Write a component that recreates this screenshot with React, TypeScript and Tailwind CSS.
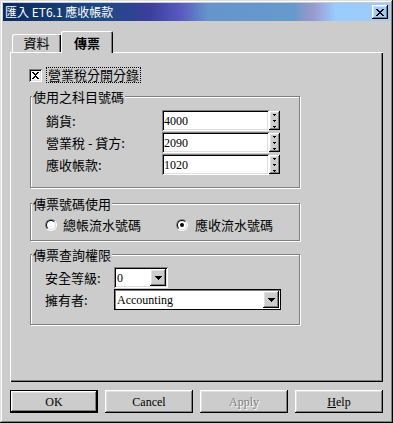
import type { ReactNode } from "react";

const raised = "shadow-[inset_-1px_-1px_#000,inset_1px_1px_#fff,inset_-2px_-2px_#808080,inset_2px_2px_#dfdfdf]";
const sunken = "shadow-[inset_1px_1px_#808080,inset_-1px_-1px_#fff,inset_2px_2px_#000,inset_-2px_-2px_#dfdfdf]";
const tabEdge = "shadow-[inset_1px_1px_#fff,inset_-1px_0_#000,inset_-2px_0_#808080]";
const serif = "font-['Liberation_Serif',serif]";

// pixel X used by the close box and the checkbox
function PixelX({ rows }: { rows: string[] }) {
  return (
    <svg width={rows[0].length} height={rows.length} shapeRendering="crispEdges">
      {rows.map((r, y) =>
        r.split("").map((c, x) => (c === "x" ? <rect key={`${x}-${y}`} x={x} y={y} width={1} height={1} fill="#000" /> : null))
      )}
    </svg>
  );
}

function DownArrow() {
  return (
    <svg width="7" height="4" shapeRendering="crispEdges">
      <rect x="0" y="0" width="7" height="1" fill="#000" />
      <rect x="1" y="1" width="5" height="1" fill="#000" />
      <rect x="2" y="2" width="3" height="1" fill="#000" />
      <rect x="3" y="3" width="1" height="1" fill="#000" />
    </svg>
  );
}

function Spinner() {
  return (
    <div className={`w-[11px] h-[19px] ${raised} flex items-center justify-center`}>
      <svg width="3" height="14" shapeRendering="crispEdges">
        {[0, 6, 12].map((y) => (
          <g key={y}>
            <rect x="0" y={y} width="3" height="1" fill="#000" />
            <rect x="1" y={y + 1} width="1" height="1" fill="#000" />
          </g>
        ))}
      </svg>
    </div>
  );
}

function Group({ title, className, children }: { title: string; className: string; children: ReactNode }) {
  return (
    <div className={`relative ml-[20px] w-[270px] border border-[#808080] shadow-[inset_1px_1px_#fff,1px_1px_#fff] ${className}`}>
      <span className="absolute left-[1px] -top-[7px] bg-[#cccccc] px-px leading-[14px]">{title}</span>
      {children}
    </div>
  );
}

function Radio({ checked }: { checked?: boolean }) {
  return (
    <div className="w-[12px] h-[12px] rounded-full border border-[#808080] border-r-white border-b-white">
      <div className="w-full h-full rounded-full border border-black border-r-[#dfdfdf] border-b-[#dfdfdf] bg-white flex items-center justify-center">
        {checked && <div className="w-[4px] h-[4px] rounded-full bg-black" />}
      </div>
    </div>
  );
}

function Button({ label, isDefault, disabled }: { label: ReactNode; isDefault?: boolean; disabled?: boolean }) {
  return (
    <div
      className={`w-[88px] h-[23px] flex items-center justify-center ${raised} ${serif} text-[12px] ${
        isDefault ? "border border-black" : ""
      } ${disabled ? "text-[#808080] [text-shadow:1px_1px_#fff]" : ""}`}
    >
      {label}
    </div>
  );
}

export default function App() {
  const fields = [
    { label: "銷貨:", value: "4000" },
    { label: "營業稅 - 貸方:", value: "2090" },
    { label: "應收帳款:", value: "1020" },
  ];

  return (
    <div className="w-[393px] h-[423px] bg-[#cccccc] p-[3px] flex flex-col shadow-[inset_-1px_-1px_#000,inset_1px_1px_#dfdfdf,inset_-2px_-2px_#808080,inset_2px_2px_#fff] font-['Noto_Sans_CJK_TC',sans-serif] text-[13px] text-black">
      {/* Title bar */}
      <div className="h-[18px] flex items-center justify-between px-[2px] bg-[linear-gradient(to_right,#0a2a60_0%,#1e4a84_25%,#3a3f9c_38%,#5a5ac0_46%,#6496cc_53%,#6699cc_75%,#9999cc_80%,#99ccff_86%,#a0ccf8_100%)]">
        <span className="text-white text-[12px] leading-[14px]">匯入 ET6.1 應收帳款</span>
        <div className={`w-[16px] h-[14px] ${raised} flex items-center justify-center`}>
          <PixelX rows={["xx....xx", ".xx..xx.", "..xxxx..", "...xx...", "..xxxx..", ".xx..xx.", "xx....xx"]} />
        </div>
      </div>

      {/* Tabs */}
      <div className="mt-[10px] h-[21px] flex items-end pl-[9px]">
        <div className={`w-[49px] h-[18px] ${tabEdge} rounded-tl-[2px] pt-[2px] text-center leading-[13px]`}>資料</div>
        <div className={`relative z-10 -mb-px w-[52px] h-[22px] bg-[#cccccc] ${tabEdge} rounded-t-[2px] pt-[5px] text-center leading-[13px] font-bold`}>
          傳票
        </div>
      </div>

      {/* Tab panel */}
      <div className="ml-[7px] w-[373px] h-[330px] flex flex-col shadow-[inset_1px_1px_#fff,inset_-1px_-1px_#000,inset_-2px_-2px_#808080]">
        <div className="mt-[15px] ml-[19px] h-[16px] flex items-center">
          <div className={`w-[13px] h-[13px] bg-white ${sunken} flex items-center justify-center`}>
            <PixelX rows={["xx...xx", ".xx.xx.", "..xxx..", "...x...", "..xxx..", ".xx.xx.", "xx...xx"]} />
          </div>
          <span className="ml-[4px] h-[16px] px-px border border-dotted border-black leading-[14px]">營業稅分開分錄</span>
        </div>

        <Group title="使用之科目號碼" className="mt-[13px] pt-[13px] pb-[12px] pl-[15px]">
          <div className="flex flex-col gap-[1px]">
            {fields.map((f) => (
              <div key={f.label} className="h-[21px] flex items-center">
                <span className="w-[116px] leading-[14px]">{f.label}</span>
                <div className={`w-[107px] h-[21px] bg-white ${sunken} pl-[2px] flex items-center ${serif} text-[12px] leading-[14px]`}>
                  {f.value}
                </div>
                <Spinner />
              </div>
            ))}
          </div>
        </Group>

        <Group title="傳票號碼使用" className="mt-[15px] h-[38px] pt-[15px] pl-[14px]">
          <div className="h-[12px] flex items-center">
            <div className="w-[131px] flex items-center gap-[6px]">
              <Radio />
              <span className="leading-[14px]">總帳流水號碼</span>
            </div>
            <div className="flex items-center gap-[7px]">
              <Radio checked />
              <span className="leading-[14px]">應收流水號碼</span>
            </div>
          </div>
        </Group>

        <Group title="傳票查詢權限" className="mt-[13px] h-[71px] pt-[12px] pl-[14px]">
          <div className="flex flex-col gap-[1px]">
            <div className="h-[21px] flex items-center">
              <span className="w-[69px] leading-[14px]">安全等級:</span>
              <div className={`w-[54px] h-[21px] bg-white ${sunken} flex items-center justify-between pl-[3px] pr-[2px]`}>
                <span className={`${serif} text-[12px] leading-[14px]`}>0</span>
                <div className={`w-[16px] h-[17px] bg-[#cccccc] ${raised} flex items-center justify-center`}>
                  <DownArrow />
                </div>
              </div>
            </div>
            <div className="h-[21px] flex items-center">
              <span className="w-[69px] leading-[14px]">擁有者:</span>
              <div className={`w-[167px] h-[21px] bg-white border border-black shadow-[inset_1px_1px_#808080] flex items-center justify-between pl-[2px] pr-px`}>
                <span className={`${serif} text-[12px] leading-[14px]`}>Accounting</span>
                <div className={`w-[16px] h-[17px] bg-[#cccccc] ${raised} flex items-center justify-center`}>
                  <DownArrow />
                </div>
              </div>
            </div>
          </div>
        </Group>
      </div>

      {/* Dialog buttons */}
      <div className="mt-[8px] pl-[7px] flex gap-[7px]">
        <Button label="OK" isDefault />
        <Button label="Cancel" />
        <Button label="Apply" disabled />
        <Button
          label={
            <span>
              <span className="underline">H</span>elp
            </span>
          }
        />
      </div>
    </div>
  );
}
